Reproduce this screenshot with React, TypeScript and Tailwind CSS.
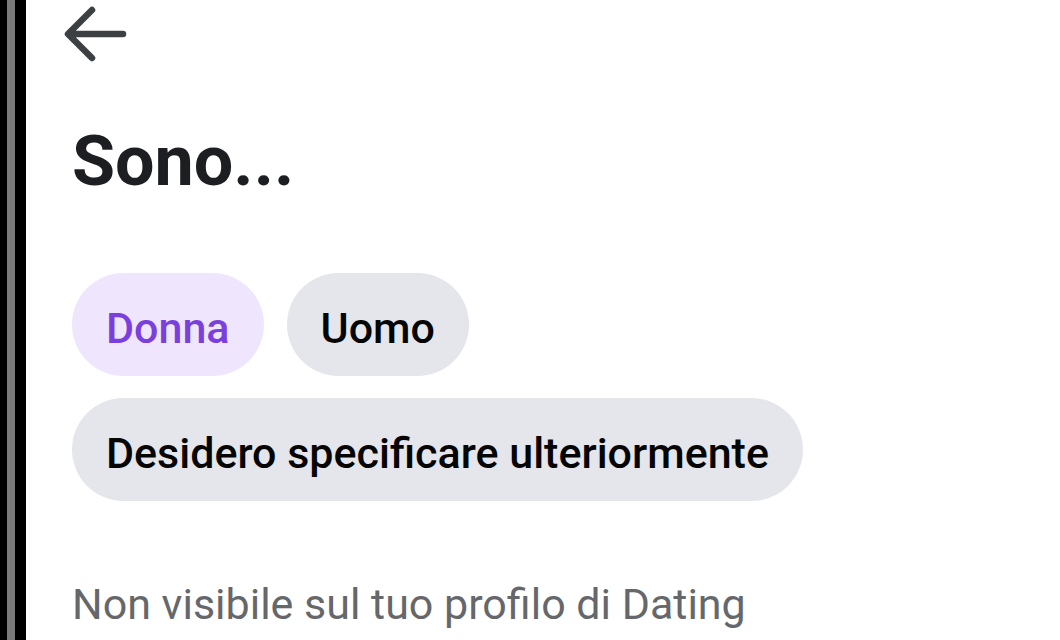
import React, { useState } from 'react';

const options = ['Donna', 'Uomo', 'Desidero specificare ulteriormente'];

const BackArrow: React.FC = () => (
  <svg width="64" height="58" viewBox="0 0 64 58" fill="none" className="text-[#3c4043]">
    <path
      d="M28 4 L4 28 L28 52 M5 28 H59"
      stroke="currentColor"
      strokeWidth="6.5"
      strokeLinecap="round"
      strokeLinejoin="round"
    />
  </svg>
);

const App: React.FC = () => {
  const [selected, setSelected] = useState('Donna');

  return (
    <div className="flex h-[640px] w-[1060px] overflow-hidden bg-white font-['Roboto',sans-serif]">
      {/* phone bezel edge */}
      <div className="flex h-full w-[26px] shrink-0 bg-black">
        <div className="ml-[7px] h-full w-[8px] bg-[#7a7a7a]" />
      </div>

      <div className="flex flex-1 flex-col pl-[38px] pt-[6px]">
        <button className="w-fit">
          <BackArrow />
        </button>

        <h1 className="ml-[8px] mt-[62px] text-[70px] font-bold leading-none text-[#1c1e21]">
          Sono...
        </h1>

        <div className="ml-[8px] mt-[77px] flex flex-wrap gap-x-[23px] gap-y-[22px] pr-[200px]">
          {options.map(opt => (
            <button
              key={opt}
              onClick={() => setSelected(opt)}
              className={`flex h-[103px] items-center rounded-full px-[34px] pt-[8px] text-[43px] font-medium ${
                selected === opt ? 'bg-[#efe6fd] text-[#7b3fdd]' : 'bg-[#e4e6eb] text-[#050505]'
              }`}
            >
              {opt}
            </button>
          ))}
        </div>

        <p className="ml-[8px] mt-[82px] text-[43px] leading-none text-[#65676b]">
          Non visibile sul tuo profilo di Dating
        </p>
      </div>
    </div>
  );
};

export default App;
